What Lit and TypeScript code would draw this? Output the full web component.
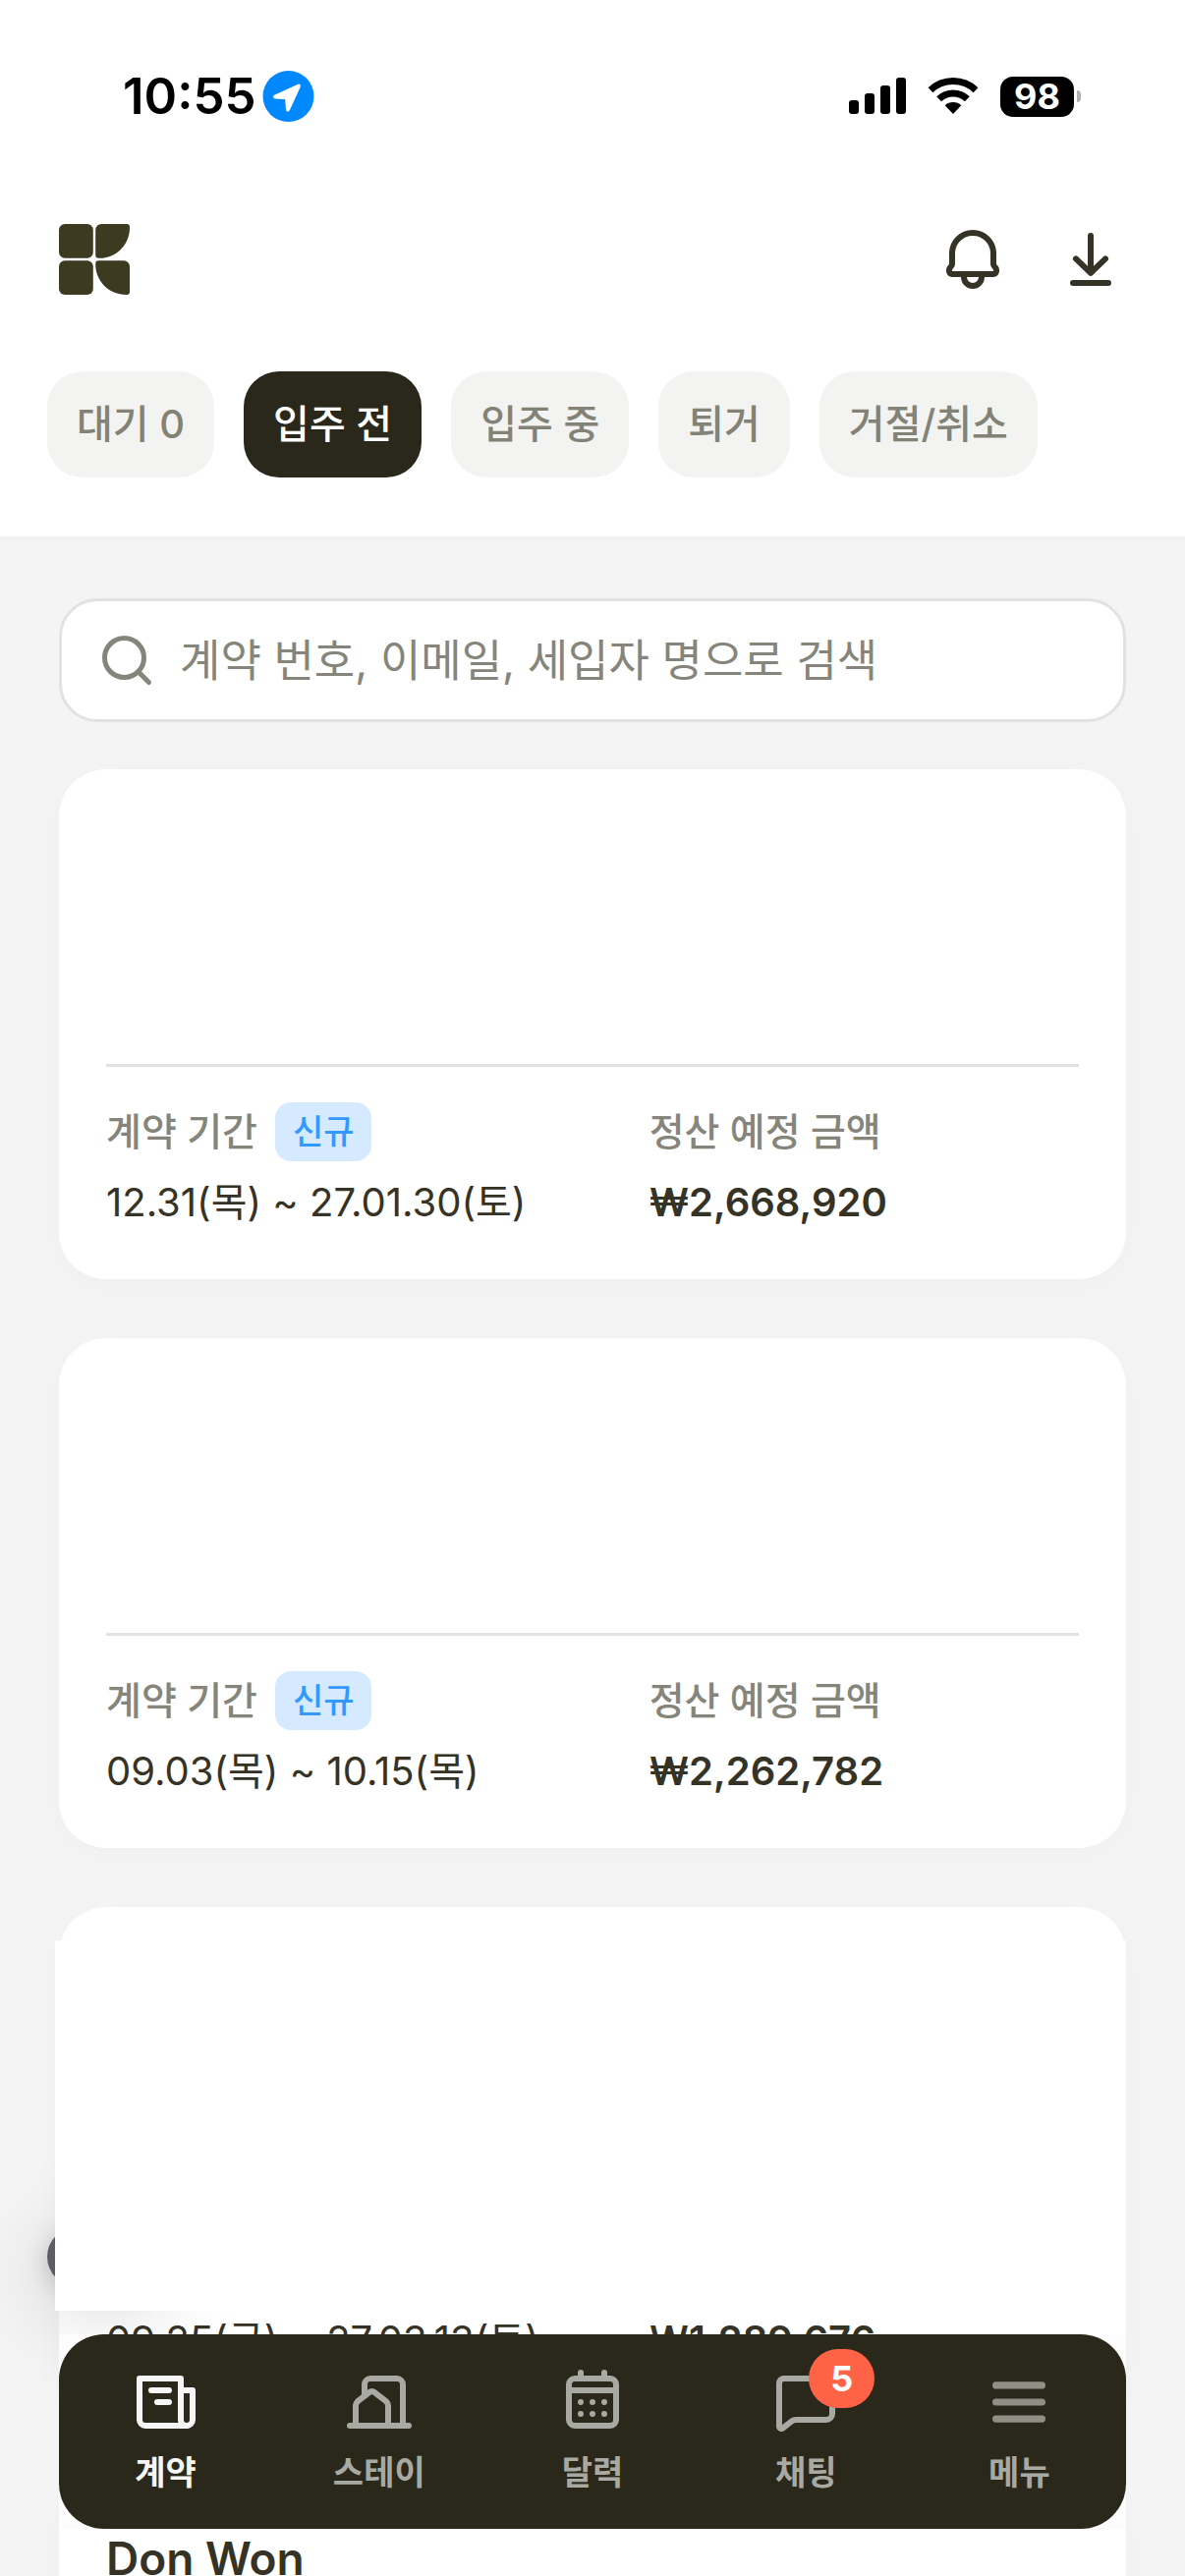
import { LitElement, html, css, svg, nothing } from 'lit';
import { customElement, property, state } from 'lit/decorators.js';
import { classMap } from 'lit/directives/class-map.js';

interface Contract {
    name?: string;
    period?: string;
    amount?: string;
    covered?: boolean;
}

const CHIPS = ['대기 0', '입주 전', '입주 중', '퇴거', '거절/취소'];

const CONTRACTS: Contract[] = [
    { period: '12.31(목) ~ 27.01.30(토)', amount: '₩2,668,920' },
    { period: '09.03(목) ~ 10.15(목)', amount: '₩2,262,782' },
    { period: '09.25(금) ~ 27.03.13(토)', amount: '₩1,289,676', covered: true },
    { name: 'Don Won' },
];

const ICONS = {
    bell: svg`
        <path d="M5 10a7 7 0 0 1 14 0v3.5c0 .4.1.6.3.8.4.4.7.8.7 1.3v.4a1 1 0 0 1-1 1H5a1 1 0 0 1-1-1v-.4c0-.5.3-.9.7-1.3.2-.2.3-.4.3-.8z"/>
        <path d="M9 17v1a3 3 0 0 0 6 0v-1"/>`,
    download: svg`<path d="M12 4v12.6M7 11.8l5 4.8 5-4.8M6 20h12"/>`,
    search: svg`<circle cx="11" cy="11" r="8"/><path d="M21 21l-4.3-4.3"/>`,
    contract: svg`
        <path d="M17 18V4H3v14a2 2 0 0 0 2 2h14"/>
        <path d="M17 8h4v10a2 2 0 0 1-4 0"/>
        <path d="M7 8h6M9 12h4"/>`,
    stay: svg`
        <path d="M2 20h20"/>
        <path d="M7 9.8V6a2 2 0 0 1 2-2h9a2 2 0 0 1 2 2v14"/>
        <path d="M4 20v-6.8c0-.6.3-1.1.7-1.5l3.9-3a1.4 1.4 0 0 1 1.8 0l3.9 3c.4.4.7.9.7 1.5V20"/>`,
    calendar: svg`
        <rect x="4" y="4" width="16" height="16" rx="2"/>
        <path d="M8 2v2M16 2v2M4 8h16"/>
        <path d="M8 12h0M12 12h0M16 12h0M8 16h0M12 16h0M16 16h0"/>`,
    chat: svg`<path d="M8.7 18H19a2 2 0 0 0 2-2V6a2 2 0 0 0-2-2H4.600a1.600 1.600 0 0 0-1.600 1.600V20.200a.8.8 0 0 0 1.300.6l2.900-2.300c.4-.3.9-.5 1.500-.5z"/>`,
    menu: svg`<path class="bars" d="M4.200 6.300h15.600M4.200 12h15.600M4.200 17.700h15.600"/>`,
};

const TABS: { icon: keyof typeof ICONS; label: string; badge?: number }[] = [
    { icon: 'contract', label: '계약' },
    { icon: 'stay', label: '스테이' },
    { icon: 'calendar', label: '달력' },
    { icon: 'chat', label: '채팅', badge: 5 },
    { icon: 'menu', label: '메뉴' },
];

const icon = (name: keyof typeof ICONS) => html`
    <svg class="icon" viewBox="0 0 24 24" aria-hidden="true">${ICONS[name]}</svg>
`;

const iconStyles = css`
    .icon {
        display: block;
        width: 72px;
        height: 72px;
        fill: none;
        stroke: currentColor;
        stroke-width: 2;
        stroke-linecap: round;
        stroke-linejoin: round;
    }
    .bars {
        stroke: #8f8f86;
        stroke-width: 2.4;
    }
    button {
        font: inherit;
        color: inherit;
        border: 0;
        padding: 0;
        background: none;
        cursor: pointer;
    }
`;

@customElement('status-bar')
export class StatusBar extends LitElement {
    static styles = css`
        :host {
            display: flex;
            justify-content: space-between;
            align-items: center;
            height: 52px;
            padding: 72px 106px 0 125px;
            color: #000;
        }
        .side {
            display: flex;
            align-items: center;
        }
        .left {
            gap: 6px;
        }
        .right {
            gap: 22px;
        }
        .time {
            font-size: 51px;
            font-weight: 600;
            line-height: 52px;
        }
        .battery {
            display: flex;
            align-items: center;
            gap: 3px;
        }
        .level {
            width: 75px;
            border-radius: 13px;
            background: #000;
            color: #fff;
            font-size: 36px;
            font-weight: 700;
            line-height: 41px;
            text-align: center;
        }
        .nub {
            width: 4px;
            height: 12px;
            border-radius: 0 4px 4px 0;
            background: #b0b0b0;
        }
        svg {
            display: block;
        }
    `;

    render() {
        return html`
            <div class="side left">
                <span class="time">10:55</span>
                <svg width="53" height="52" viewBox="0 0 53 52" aria-hidden="true">
                    <circle cx="26.5" cy="26" r="26" fill="#0089ff"/>
                    <path d="M37 15.500L13 26.500l12 .7 1 12.300z" fill="#fff" stroke="#fff" stroke-width="4" stroke-linejoin="round"/>
                </svg>
            </div>
            <div class="side right">
                <svg width="58" height="38" viewBox="0 0 58 38" aria-hidden="true">
                    <rect y="23" width="10" height="14" rx="3"/>
                    <rect x="16" y="16" width="10" height="21" rx="3"/>
                    <rect x="32" y="8" width="10" height="29" rx="3"/>
                    <rect x="48" width="10" height="37" rx="3"/>
                </svg>
                <svg width="52" height="38" viewBox="0 0 52 38" fill="none" stroke="#000" stroke-width="7" aria-hidden="true">
                    <path d="M3 12.700A33.500 33.500 0 0 1 49 12.700"/>
                    <path d="M11.600 21.800A21 21 0 0 1 40.400 21.800"/>
                    <path d="M26 37l-8.300-8.700a12 12 0 0 1 16.600 0z" fill="#000" stroke="none"/>
                </svg>
                <div class="battery">
                    <span class="level">98</span>
                    <span class="nub"></span>
                </div>
            </div>
        `;
    }
}

@customElement('contract-card')
export class ContractCard extends LitElement {
    @property({ attribute: false }) contract!: Contract;

    static styles = [
        iconStyles,
        css`
            :host {
                display: block;
            }
            .card {
                position: relative;
                padding: 48px;
                border-radius: 48px;
                background: #fff;
                box-shadow: 0 6px 36px rgba(0, 0, 0, 0.025);
                color: #353226;
            }
            .guest {
                height: 252px;
            }
            .name {
                margin: 0;
                font-size: 46px;
                font-weight: 600;
                line-height: 72px;
            }
            .details {
                display: grid;
                grid-template-columns: 5fr 4fr;
                gap: 12px 6px;
                margin: 0;
                padding-top: 36px;
                border-top: 3px solid #e2e2e2;
            }
            .group {
                display: flex;
                flex-direction: column;
                gap: 12px;
            }
            dt {
                display: flex;
                align-items: center;
                gap: 18px;
                color: #85857b;
                font-size: 39px;
                font-weight: 500;
                line-height: 60px;
            }
            dd {
                margin: 0;
                font-size: 40px;
                line-height: 60px;
                white-space: nowrap;
            }
            .amount {
                font-weight: 600;
            }
            .tag {
                padding: 0 18px;
                border-radius: 16px;
                background: #d6eaff;
                color: #3399ff;
                font-size: 34px;
            }
            .floating {
                position: absolute;
                top: 326px;
                left: -12px;
                width: 120px;
                height: 60px;
                border-radius: 30px;
                background: #5d5d68;
                box-shadow: 0 18px 90px rgba(0, 0, 0, 0.22), 0 6px 24px rgba(0, 0, 0, 0.18);
            }
            .cover {
                position: absolute;
                top: 34px;
                right: 0;
                left: -4px;
                height: 377px;
                background: #fff;
            }
        `,
    ];

    render() {
        const { name, period, amount, covered } = this.contract;
        return html`
            <article class="card">
                <div class="guest">${name ? html`<h2 class="name">${name}</h2>` : nothing}</div>
                ${period
                    ? html`
                        <dl class="details">
                            <div class="group">
                                <dt>계약 기간 <span class="tag">신규</span></dt>
                                <dd>${period}</dd>
                            </div>
                            <div class="group">
                                <dt>정산 예정 금액</dt>
                                <dd class="amount">${amount}</dd>
                            </div>
                        </dl>
                    `
                    : nothing}
                ${covered
                    ? html`
                        <button class="floating" type="button" aria-label="문의"></button>
                        <div class="cover"></div>
                    `
                    : nothing}
            </article>
        `;
    }
}

@customElement('tab-bar')
export class TabBar extends LitElement {
    @state() private active = 0;

    static styles = [
        iconStyles,
        css`
            :host {
                display: block;
                background: #fcfcfc;
            }
            .bar {
                display: grid;
                grid-template-columns: repeat(5, 1fr);
                padding: 33px 0;
                border-radius: 46px;
                background: #2a281a;
            }
            .tab {
                display: flex;
                flex-direction: column;
                align-items: center;
                gap: 12px;
                color: #a9a9a3;
                font-size: 34px;
                font-weight: 700;
                line-height: 48px;
            }
            .tab.active {
                color: #f5f5f5;
            }
            .glyph {
                position: relative;
            }
            .badge {
                position: absolute;
                top: -18px;
                left: 39px;
                width: 67px;
                border-radius: 30px;
                background: #ff6347;
                color: #fff;
                font-size: 36px;
                line-height: 60px;
                text-align: center;
            }
        `,
    ];

    render() {
        return html`
            <nav class="bar">
                ${TABS.map(
                    (tab, index) => html`
                        <button
                            type="button"
                            class=${classMap({ tab: true, active: index === this.active })}
                            @click=${() => { this.active = index; }}
                        >
                            <span class="glyph">
                                ${icon(tab.icon)}
                                ${tab.badge ? html`<span class="badge">${tab.badge}</span>` : nothing}
                            </span>
                            <span>${tab.label}</span>
                        </button>
                    `)}
            </nav>
        `;
    }
}

@customElement('app-root')
export class AppRoot extends LitElement {
    @state() private chip = 1;

    static styles = [
        iconStyles,
        css`
            :host {
                position: relative;
                display: flex;
                flex-direction: column;
                height: 100vh;
                overflow: hidden;
                background: #f4f4f4;
                font-family: Inter, 'Noto Sans CJK KR', sans-serif;
            }
            header {
                flex: none;
                border-bottom: 3px solid #f1f1f1;
                background: #fff;
                color: #353226;
            }
            .top {
                display: flex;
                justify-content: space-between;
                padding: 104px 60px 78px;
            }
            .logo {
                display: block;
            }
            .actions {
                display: flex;
                gap: 48px;
            }
            .chips {
                display: flex;
                gap: 30px;
                padding: 0 48px 60px;
            }
            .chip {
                padding: 0 30px;
                border-radius: 36px;
                background: #f3f3f1;
                color: #828277;
                font-size: 40px;
                font-weight: 500;
                line-height: 108px;
                white-space: nowrap;
            }
            .chip.active {
                background: #2a281a;
                color: #fff;
            }
            main {
                display: flex;
                flex: 1;
                flex-direction: column;
                min-height: 0;
                padding: 60px 60px 0;
            }
            .search {
                display: flex;
                flex: none;
                align-items: center;
                gap: 24px;
                height: 120px;
                margin-bottom: 48px;
                padding: 0 36px;
                border: 3px solid #e2e2e2;
                border-radius: 39px;
                background: #fff;
                color: #85857b;
            }
            .search .icon {
                width: 60px;
                height: 60px;
            }
            .search input {
                flex: 1;
                min-width: 0;
                height: 72px;
                border: 0;
                padding: 0;
                outline: 0;
                background: none;
                color: #353226;
                font-family: inherit;
                font-size: 45px;
            }
            .search input::placeholder {
                color: #85857b;
                opacity: 1;
            }
            .list {
                display: flex;
                flex-direction: column;
                gap: 60px;
            }
            tab-bar {
                position: absolute;
                right: 60px;
                bottom: 48px;
                left: 60px;
            }
        `,
    ];

    render() {
        return html`
            <header>
                <status-bar></status-bar>
                <div class="top">
                    <svg class="logo" width="72" height="72" viewBox="0 0 72 72" fill="#3c3a20" role="img" aria-label="Home">
                        <rect width="34.800" height="34.800" rx="6"/>
                        <rect y="37.200" width="34.800" height="34.800" rx="6"/>
                        <path d="M43.200 0H69a3 3 0 0 1 3 3v1c0 17-13.500 30.800-31 30.800h-.8a3 3 0 0 1-3-3V6a6 6 0 0 1 6-6z"/>
                        <path d="M40.200 37.200H66a6 6 0 0 1 6 6V69a3 3 0 0 1-3 3h-1C51 72 37.200 58 37.200 41v-.8a3 3 0 0 1 3-3z"/>
                    </svg>
                    <div class="actions">
                        <button type="button" aria-label="알림">${icon('bell')}</button>
                        <button type="button" aria-label="다운로드">${icon('download')}</button>
                    </div>
                </div>
                <div class="chips">
                    ${CHIPS.map(
                        (label, index) => html`
                            <button
                                type="button"
                                class=${classMap({ chip: true, active: index === this.chip })}
                                @click=${() => { this.chip = index; }}
                            >${label}</button>
                        `)}
                </div>
            </header>
            <main>
                <label class="search">
                    ${icon('search')}
                    <input type="text" aria-label="검색" placeholder="계약 번호, 이메일, 세입자 명으로 검색">
                </label>
                <div class="list">
                    ${CONTRACTS.map(item => html`<contract-card .contract=${item}></contract-card>`)}
                </div>
            </main>
            <tab-bar></tab-bar>
        `;
    }
}
